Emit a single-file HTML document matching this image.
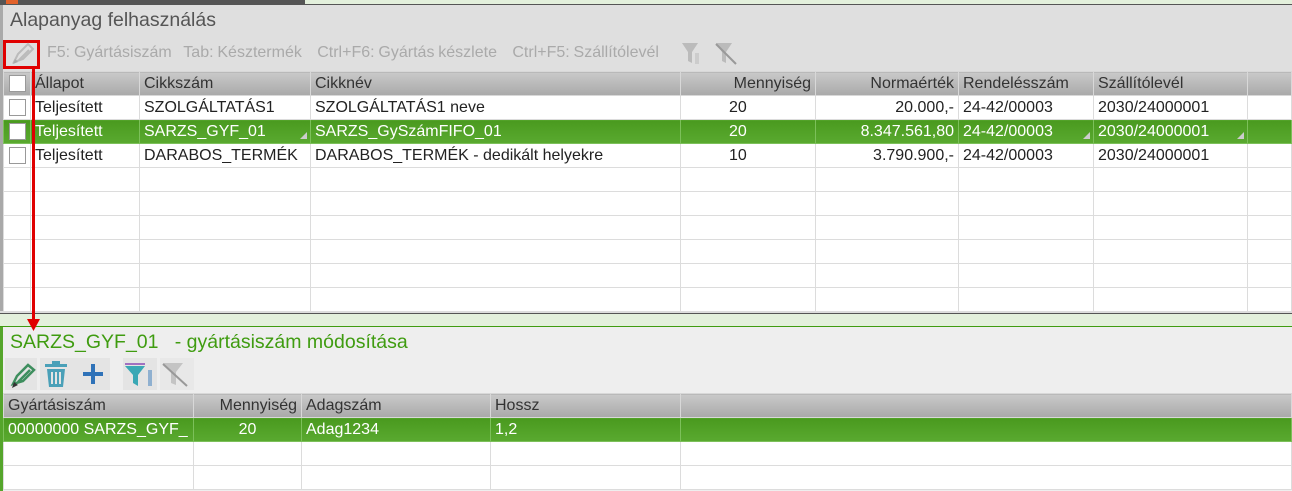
<!DOCTYPE html>
<html><head><meta charset="utf-8"><style>
*{margin:0;padding:0;box-sizing:border-box}
body{width:1292px;height:491px;overflow:hidden;background:#e3f0dc;font-family:"Liberation Sans",sans-serif;position:relative}
.abs{position:absolute}
.t{font-size:16px;white-space:nowrap;color:#222}
table{border-collapse:collapse;position:absolute;table-layout:fixed}
td{border:1px solid #dcdcdc;height:24px;padding:0 4px;font-size:16px;white-space:nowrap;overflow:hidden;color:#222;background:#fff}
tr.h td{background:linear-gradient(#c9c9c9,#a9a9a9);border-color:#d8d8d8;color:#333}
tr.g td{background:linear-gradient(#4a9a1f,#5aaa30);color:#fff;border-color:#7cc05a}
.r{text-align:right}.c{text-align:center}
.cb{display:inline-block;width:17px;height:17px;border:1px solid #999;background:#fff;vertical-align:middle}
.tri{position:absolute;right:3px;bottom:4px;width:0;height:0;border-left:7px solid transparent;border-bottom:7px solid #ccc}
</style></head><body>
<div class="abs" style="left:0;top:0;width:305px;height:5px;background:#555"></div>
<div class="abs" style="left:6px;top:0;width:12px;height:4px;background:#e2622a"></div>
<div class="abs" style="left:0;top:4px;width:1292px;height:2px;background:#555"></div>
<!-- top panel -->
<div class="abs" style="left:0;top:5px;width:1292px;height:308px;background:#dfdfdf;border-left:3px solid #a9a9a9"></div>
<div class="abs" style="left:10px;top:9px;font-size:19.5px;color:#555">Alapanyag felhasználás</div>
<div class="abs" style="left:3px;top:40px;width:37px;height:29px;border:3px solid #e00000"></div>
<svg class="abs" style="left:10px;top:42px" width="26" height="24"><path d="M4 20 L8 12 L18 2 L23 7 L13 17 Z M9 18 L19 8" fill="none" stroke="#bbb" stroke-width="2"/><path d="M3 22 L5 17 L8 20 Z" fill="#aaa"/></svg>
<div class="abs t" style="left:47px;top:44px;color:#aaa;word-spacing:-0.6px">F5: Gyártásiszám&nbsp;&nbsp;&nbsp;Tab: Késztermék&nbsp;&nbsp;&nbsp;&nbsp;Ctrl+F6: Gyártás készlete&nbsp;&nbsp;&nbsp;&nbsp;Ctrl+F5: Szállítólevél</div>
<svg class="abs" style="left:680px;top:41px" width="60" height="26"><path d="M2 2 H18 L12 11 V22 L8 20 V11 Z" fill="#bbb"/><rect x="15" y="12" width="4" height="11" fill="#ccc"/><path d="M36 2 H52 L46 11 V22 L42 20 V11 Z" fill="#bbb"/><line x1="36" y1="3" x2="56" y2="23" stroke="#999" stroke-width="2"/></svg>
<table style="left:3px;top:71px;width:1289px">
<colgroup><col style="width:27px"><col style="width:109px"><col style="width:171px"><col style="width:370px"><col style="width:135px"><col style="width:143px"><col style="width:135px"><col style="width:154px"><col></colgroup>
<tr class="h"><td class="c"><span class="cb"></span></td><td>Állapot</td><td>Cikkszám</td><td>Cikknév</td><td class="r">Mennyiség</td><td class="r">Normaérték</td><td>Rendelésszám</td><td>Szállítólevél</td><td></td></tr>
<tr><td class="c"><span class="cb"></span></td><td>Teljesített</td><td>SZOLGÁLTATÁS1</td><td>SZOLGÁLTATÁS1 neve</td><td style="padding-left:48px">20</td><td class="r">20.000,-</td><td>24-42/00003</td><td>2030/24000001</td><td></td></tr>
<tr class="g"><td class="c"><span class="cb"></span></td><td>Teljesített</td><td style="position:relative">SARZS_GYF_01<span class="tri"></span></td><td>SARZS_GySzámFIFO_01</td><td style="padding-left:48px">20</td><td class="r">8.347.561,80</td><td style="position:relative">24-42/00003<span class="tri"></span></td><td style="position:relative">2030/24000001<span class="tri"></span></td><td></td></tr>
<tr><td class="c"><span class="cb"></span></td><td>Teljesített</td><td>DARABOS_TERMÉK</td><td>DARABOS_TERMÉK - dedikált helyekre</td><td style="padding-left:48px">10</td><td class="r">3.790.900,-</td><td>24-42/00003</td><td>2030/24000001</td><td></td></tr>
<tr><td></td><td></td><td></td><td></td><td></td><td></td><td></td><td></td><td></td></tr>
<tr><td></td><td></td><td></td><td></td><td></td><td></td><td></td><td></td><td></td></tr>
<tr><td></td><td></td><td></td><td></td><td></td><td></td><td></td><td></td><td></td></tr>
<tr><td></td><td></td><td></td><td></td><td></td><td></td><td></td><td></td><td></td></tr>
<tr><td></td><td></td><td></td><td></td><td></td><td></td><td></td><td></td><td></td></tr>
<tr><td style="height:23px"></td><td></td><td></td><td></td><td></td><td></td><td></td><td></td><td></td></tr>
</table>
<div class="abs" style="left:0;top:311px;width:1292px;height:2px;background:#ddd"></div>
<div class="abs" style="left:0;top:313px;width:1292px;height:1px;background:#555"></div>
<div class="abs" style="left:0;top:326px;width:1292px;height:1px;background:#3f9c10"></div>
<!-- bottom panel -->
<div class="abs" style="left:0;top:327px;width:1292px;height:164px;background:#eee;border-left:3px solid #55a52b"></div>
<div class="abs" style="left:10px;top:331px;font-size:19.5px;color:#3f9c10;white-space:pre">SARZS_GYF_01   - gyártásiszám módosítása</div>
<div class="abs" style="left:5px;top:358px;width:32px;height:32px;background:#e4e4e4"></div>
<div class="abs" style="left:40px;top:358px;width:36px;height:32px;background:#e4e4e4"></div>
<div class="abs" style="left:76px;top:358px;width:34px;height:32px;background:#e4e4e4"></div>
<div class="abs" style="left:123px;top:358px;width:34px;height:32px;background:#e4e4e4"></div>
<div class="abs" style="left:160px;top:358px;width:34px;height:32px;background:#e8e8e8"></div>
<svg class="abs" style="left:5px;top:358px" width="190" height="32"><path d="M8 26 L12 18 L23 7 L29 12 L18 23 Z M13 24 L25 12" fill="none" stroke="#3e8e5e" stroke-width="2.5"/><path d="M7 30 L9 24 L13 27 Z" fill="#333"/>
<rect x="40" y="6" width="22" height="3" fill="#4aa0b8"/><rect x="47" y="3" width="8" height="3" fill="#4aa0b8"/><path d="M42 11 H60 L58 29 H44 Z" fill="#4aa0b8"/><rect x="46" y="14" width="2" height="12" fill="#e4e4e4"/><rect x="50" y="14" width="2" height="12" fill="#e4e4e4"/><rect x="54" y="14" width="2" height="12" fill="#e4e4e4"/>
<rect x="78" y="14" width="20" height="4" fill="#2f72b8"/><rect x="86" y="6" width="4" height="20" fill="#2f72b8"/>
<rect x="120" y="5" width="20" height="2" fill="#a070c0"/><path d="M120 8 H140 L133 17 V28 L128 25 V17 Z" fill="#3aa8b5"/><rect x="143" y="12" width="4" height="16" fill="#8fb0d0"/>
<path d="M158 5 H178 L171 14 V27 L166 25 V14 Z" fill="#c4c4c4"/><line x1="158" y1="6" x2="182" y2="28" stroke="#999" stroke-width="2"/></svg>
<table style="left:3px;top:393px;width:1289px">
<colgroup><col style="width:190px"><col style="width:108px"><col style="width:189px"><col style="width:190px"><col></colgroup>
<tr class="h"><td>Gyártásiszám</td><td class="r">Mennyiség</td><td>Adagszám</td><td>Hossz</td><td></td></tr>
<tr class="g"><td>00000000 SARZS_GYF_</td><td class="c">20</td><td>Adag1234</td><td>1,2</td><td></td></tr>
<tr><td></td><td></td><td></td><td></td><td></td></tr>
<tr><td></td><td></td><td></td><td></td><td></td></tr>
</table>
<!-- red arrow -->
<div class="abs" style="left:32px;top:69px;width:3px;height:252px;background:#e00000"></div>
<svg class="abs" style="left:27px;top:319px" width="13" height="13"><path d="M0 0 H13 L6.5 12 Z" fill="#e00000"/></svg>
</body></html>
